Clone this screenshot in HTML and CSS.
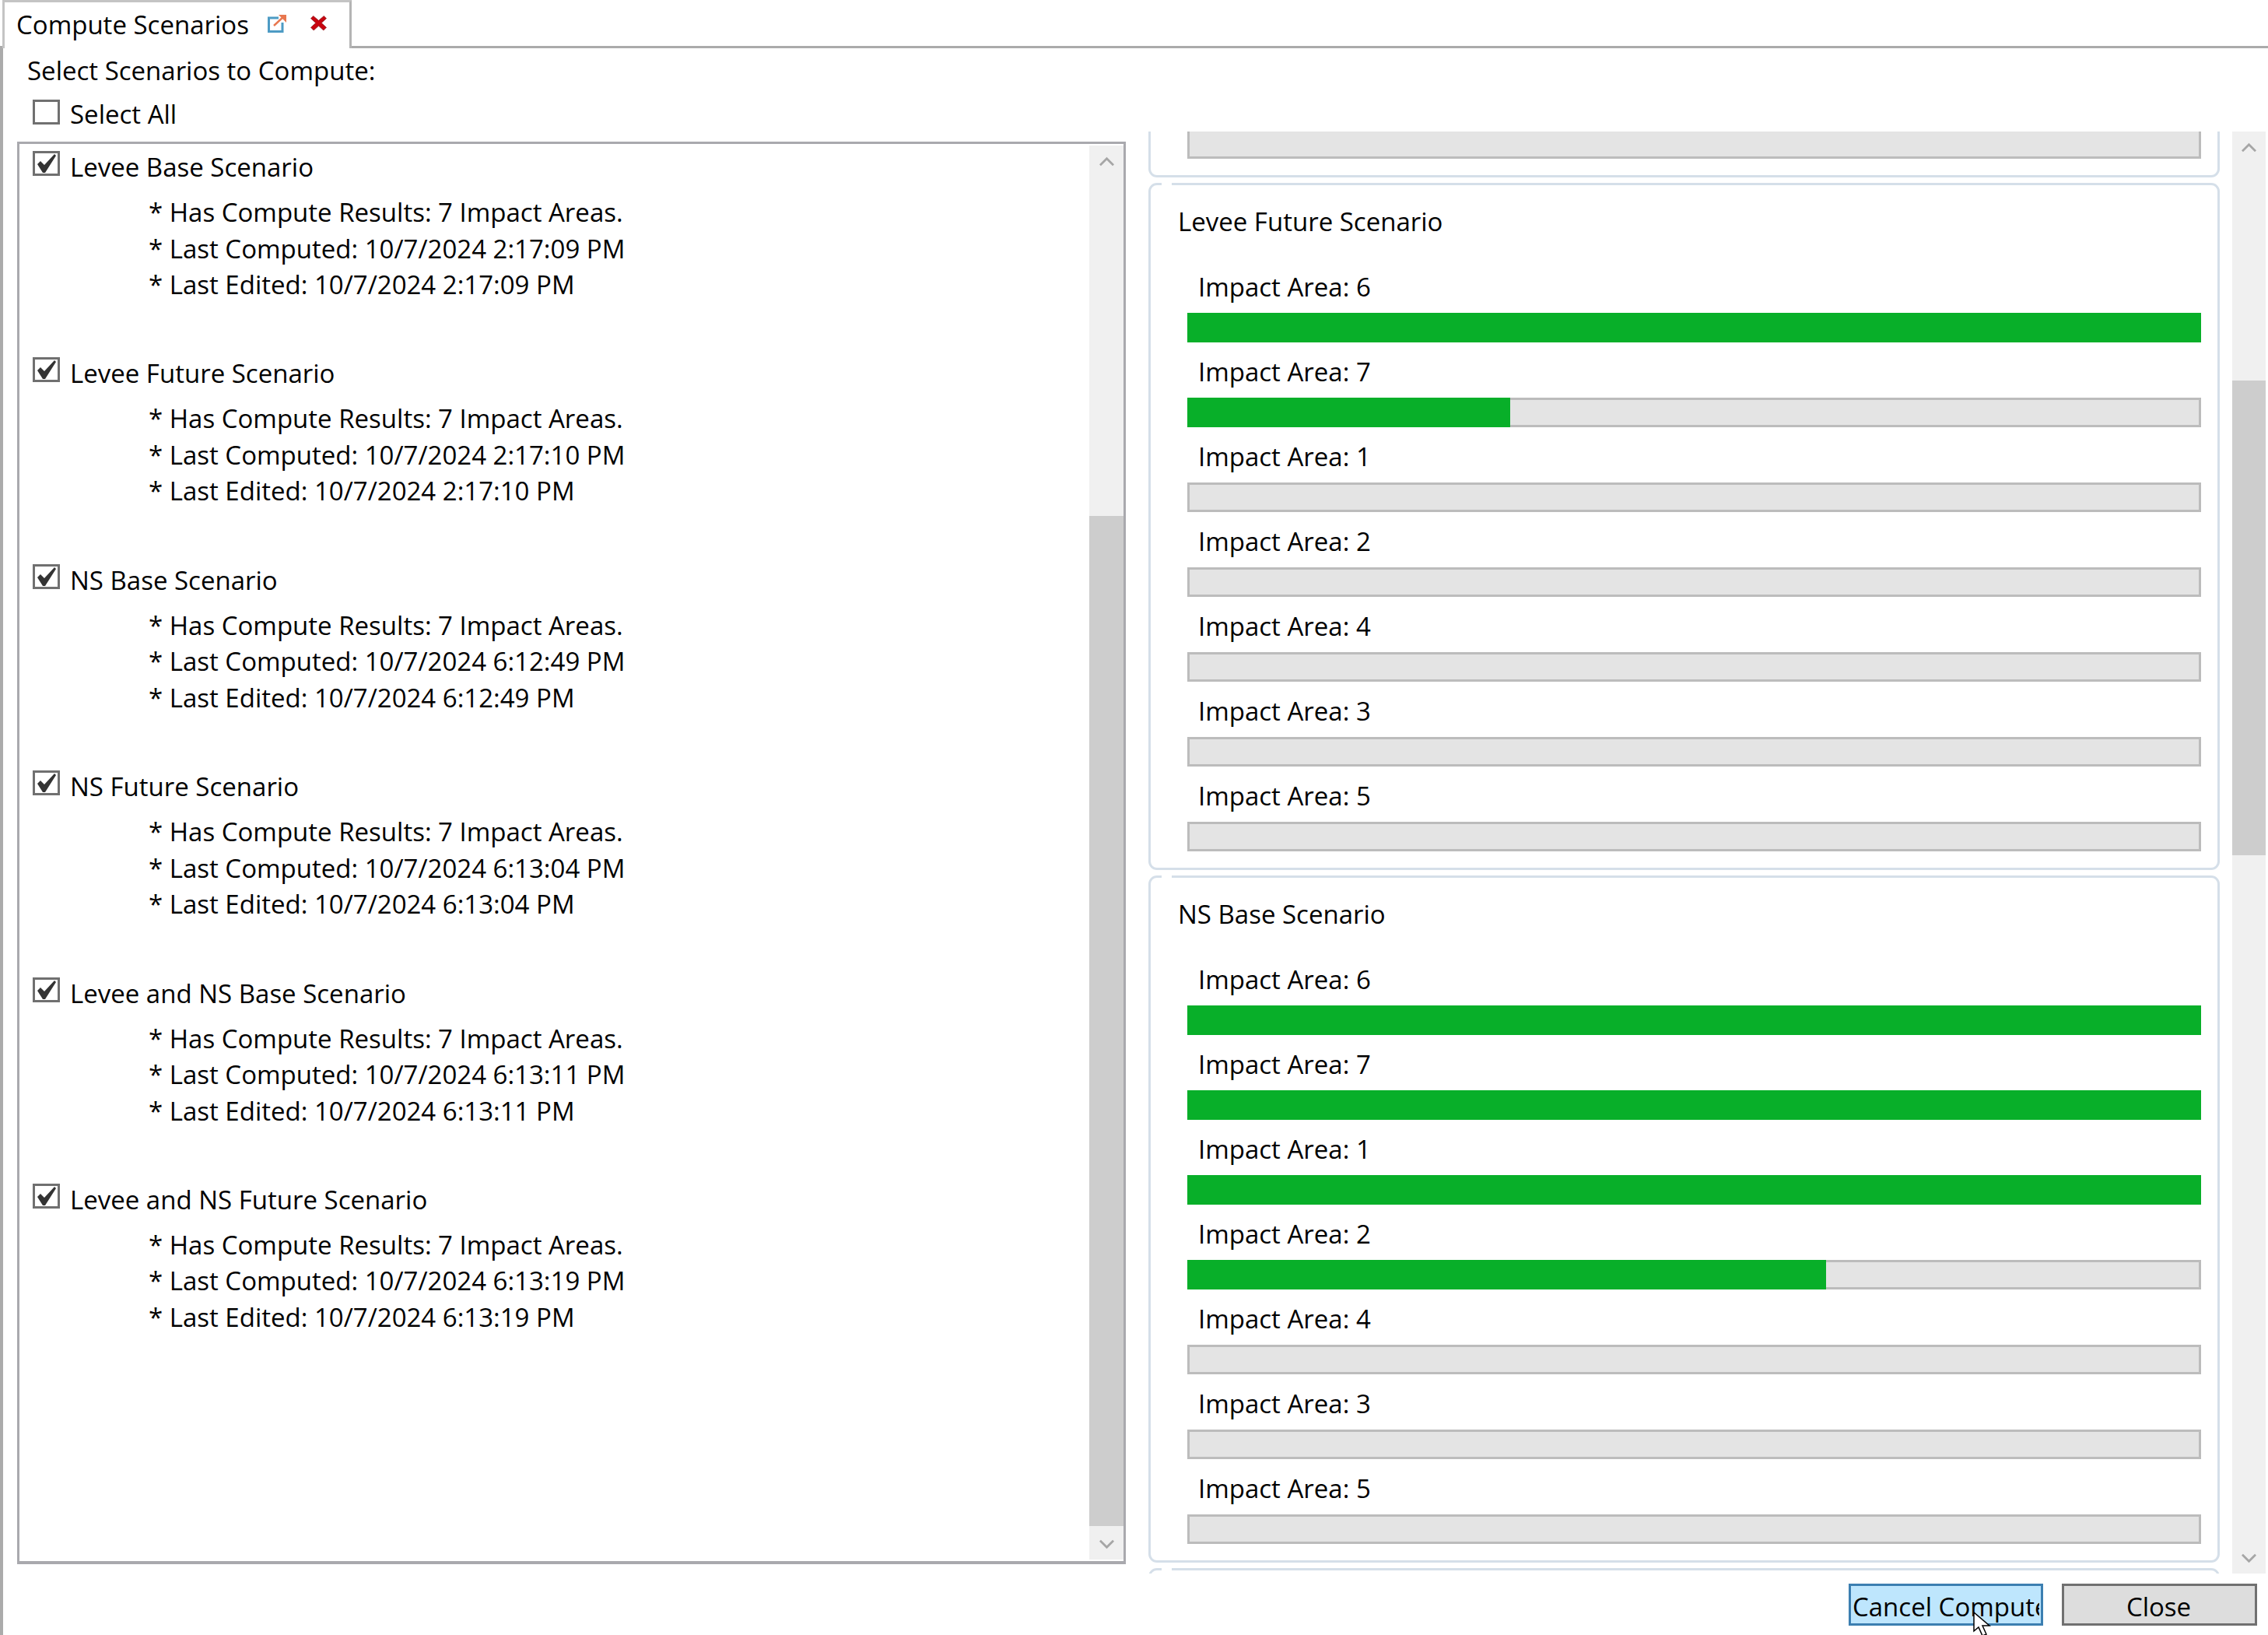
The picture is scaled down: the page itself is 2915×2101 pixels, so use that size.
FILE: index.html
```html
<!DOCTYPE html>
<html lang="en">
<head>
<meta charset="utf-8">
<title>Compute Scenarios</title>
<link rel="stylesheet" href="styles.css">
</head>
<body>
<div class="app">
  <header class="tabstrip">
    <div class="tab">
      <span class="tab-title">Compute Scenarios</span>
      <svg class="icon-pop" viewBox="0 0 26 26"><path d="M15 6H2.500v17.500H20V12" fill="none" stroke="#4d9bc4" stroke-width="3"/><path d="M9 16 23 3" fill="none" stroke="#e8774f" stroke-width="2.400"/><path d="M15 2h10v10z" fill="#e8774f"/></svg>
      <svg class="icon-close" viewBox="0 0 20 20"><path d="M3.500 1.500 10 7 16.500 1.500 19.500 4.500 13.500 10 19.500 15.500 16 19 10 13.500 4 19 .5 15.500 6.500 10 .5 4.500z" fill="#c8050f" stroke="#8d1f25" stroke-width=".7"/></svg>
    </div>
  </header>
  <main class="content">
    <section class="left">
      <div class="heading">Select Scenarios to Compute:</div>
      <label class="check-row select-all"><span class="box"></span><span>Select All</span></label>
      <div class="list">
        <div class="items">
          <div class="item">
            <div class="check-row"><span class="box"><svg class="tick" viewBox="0 0 26 24"><path d="M1 13 5 9l5 5L23 0l2 2-14 22H8z" fill="#333"/></svg></span><span>Levee Base Scenario</span></div>
            <div class="details"><div>* Has Compute Results: 7 Impact Areas.</div><div>* Last Computed: 10/7/2024 2:17:09 PM</div><div>* Last Edited: 10/7/2024 2:17:09 PM</div></div>
          </div>
          <div class="item">
            <div class="check-row"><span class="box"><svg class="tick" viewBox="0 0 26 24"><path d="M1 13 5 9l5 5L23 0l2 2-14 22H8z" fill="#333"/></svg></span><span>Levee Future Scenario</span></div>
            <div class="details"><div>* Has Compute Results: 7 Impact Areas.</div><div>* Last Computed: 10/7/2024 2:17:10 PM</div><div>* Last Edited: 10/7/2024 2:17:10 PM</div></div>
          </div>
          <div class="item">
            <div class="check-row"><span class="box"><svg class="tick" viewBox="0 0 26 24"><path d="M1 13 5 9l5 5L23 0l2 2-14 22H8z" fill="#333"/></svg></span><span>NS Base Scenario</span></div>
            <div class="details"><div>* Has Compute Results: 7 Impact Areas.</div><div>* Last Computed: 10/7/2024 6:12:49 PM</div><div>* Last Edited: 10/7/2024 6:12:49 PM</div></div>
          </div>
          <div class="item">
            <div class="check-row"><span class="box"><svg class="tick" viewBox="0 0 26 24"><path d="M1 13 5 9l5 5L23 0l2 2-14 22H8z" fill="#333"/></svg></span><span>NS Future Scenario</span></div>
            <div class="details"><div>* Has Compute Results: 7 Impact Areas.</div><div>* Last Computed: 10/7/2024 6:13:04 PM</div><div>* Last Edited: 10/7/2024 6:13:04 PM</div></div>
          </div>
          <div class="item">
            <div class="check-row"><span class="box"><svg class="tick" viewBox="0 0 26 24"><path d="M1 13 5 9l5 5L23 0l2 2-14 22H8z" fill="#333"/></svg></span><span>Levee and NS Base Scenario</span></div>
            <div class="details"><div>* Has Compute Results: 7 Impact Areas.</div><div>* Last Computed: 10/7/2024 6:13:11 PM</div><div>* Last Edited: 10/7/2024 6:13:11 PM</div></div>
          </div>
          <div class="item">
            <div class="check-row"><span class="box"><svg class="tick" viewBox="0 0 26 24"><path d="M1 13 5 9l5 5L23 0l2 2-14 22H8z" fill="#333"/></svg></span><span>Levee and NS Future Scenario</span></div>
            <div class="details"><div>* Has Compute Results: 7 Impact Areas.</div><div>* Last Computed: 10/7/2024 6:13:19 PM</div><div>* Last Edited: 10/7/2024 6:13:19 PM</div></div>
          </div>
        </div>
        <div class="scrollbar scrollbar-list">
          <div class="sb-btn"><svg viewBox="0 0 20 12"><path d="M1 11 10 2l9 9" fill="none" stroke="#a6a6a6" stroke-width="3"/></svg></div>
          <div class="sb-thumb"></div>
          <div class="sb-btn sb-end"><svg viewBox="0 0 20 12"><path d="M1 1l9 9 9-9" fill="none" stroke="#a6a6a6" stroke-width="3"/></svg></div>
        </div>
      </div>
    </section>
    <section class="right">
      <div class="progress-area">
        <div class="results">
          <div class="card card-cut"><div class="bar"></div></div>
          <div class="card">
            <div class="card-title">Levee Future Scenario</div>
            <div class="rows">
              <div class="row"><div class="row-label">Impact Area: 6</div><div class="bar"><div class="fill fill-full"></div></div></div>
              <div class="row"><div class="row-label">Impact Area: 7</div><div class="bar"><div class="fill fill-32"></div></div></div>
              <div class="row"><div class="row-label">Impact Area: 1</div><div class="bar"></div></div>
              <div class="row"><div class="row-label">Impact Area: 2</div><div class="bar"></div></div>
              <div class="row"><div class="row-label">Impact Area: 4</div><div class="bar"></div></div>
              <div class="row"><div class="row-label">Impact Area: 3</div><div class="bar"></div></div>
              <div class="row"><div class="row-label">Impact Area: 5</div><div class="bar"></div></div>
            </div>
          </div>
          <div class="card">
            <div class="card-title">NS Base Scenario</div>
            <div class="rows">
              <div class="row"><div class="row-label">Impact Area: 6</div><div class="bar"><div class="fill fill-full"></div></div></div>
              <div class="row"><div class="row-label">Impact Area: 7</div><div class="bar"><div class="fill fill-full"></div></div></div>
              <div class="row"><div class="row-label">Impact Area: 1</div><div class="bar"><div class="fill fill-full"></div></div></div>
              <div class="row"><div class="row-label">Impact Area: 2</div><div class="bar"><div class="fill fill-63"></div></div></div>
              <div class="row"><div class="row-label">Impact Area: 4</div><div class="bar"></div></div>
              <div class="row"><div class="row-label">Impact Area: 3</div><div class="bar"></div></div>
              <div class="row"><div class="row-label">Impact Area: 5</div><div class="bar"></div></div>
            </div>
          </div>
          <div class="card card-next"></div>
        </div>
        <div class="scrollbar scrollbar-results">
          <div class="sb-btn"><svg viewBox="0 0 20 12"><path d="M1 11 10 2l9 9" fill="none" stroke="#a6a6a6" stroke-width="3"/></svg></div>
          <div class="sb-thumb"></div>
          <div class="sb-btn sb-end"><svg viewBox="0 0 20 12"><path d="M1 1l9 9 9-9" fill="none" stroke="#a6a6a6" stroke-width="3"/></svg></div>
        </div>
      </div>
      <div class="actions">
        <button class="btn btn-hot" type="button"><span class="btn-text">Cancel Compute</span></button>
        <button class="btn" type="button"><span class="btn-text btn-center">Close</span></button>
      </div>
      <svg class="cursor" viewBox="0 0 26 32"><path d="M1 1v24l6-5 5 11 5-2-5-11h9z" fill="#fff" stroke="#000" stroke-width="1.500"/></svg>
    </section>
  </main>
</div>
</body>
</html>
```
FILE: styles.css
```css
* { box-sizing: border-box; }
html, body { margin: 0; padding: 0; background: #fff; }
body {
  font-family: "Open Sans", "Noto Sans", "Liberation Sans", sans-serif;
  font-size: 33px;
  line-height: 46.5px;
  color: #000;
}
.app { width: 2915px; height: 2101px; display: flex; flex-direction: column; overflow: hidden; position: relative; }

.tabstrip { height: 62px; border-bottom: 3px solid #ababab; padding-left: 3px; display: flex; flex: none; }
.tab {
  width: 449px; height: 62px;
  border: 3px solid #c4c4c4; border-bottom: 0; border-right-color: #b4b4b4;
  padding-left: 15px;
  display: flex; align-items: center;
  background: #fff;
}
.tab-title { white-space: nowrap; }
.icon-pop { width: 26px; height: 26px; margin-left: 23px; margin-top: -6px; flex: none; }
.icon-close { width: 21px; height: 21px; margin-left: 30px; margin-top: -6px; flex: none; }

.content { flex: 1; min-height: 0; display: flex; border-left: 4px solid #ababab; padding-left: 18px; gap: 29px; }
.left { width: 1425px; flex: none; padding-top: 6px; display: flex; flex-direction: column; }
.heading { padding-left: 13px; white-space: nowrap; }
.check-row { display: flex; align-items: flex-start; gap: 13px; white-space: nowrap; }
.select-all { margin-top: 9px; padding-left: 20px; }
.box {
  width: 35px; height: 32px; margin-top: 2px; flex: none;
  border: 3px solid #707070; background: #fff;
  display: flex; align-items: center; justify-content: center;
}
.select-all .box { margin-top: 4.5px; }
.tick { width: 26px; height: 24px; flex: none; }

.list {
  margin-top: 12px; height: 1828px;
  border: 3px solid #a9a9ae; border-bottom-width: 4px;
  display: flex;
}
.items { flex: 1; min-width: 0; padding: 7px 0 0 17px; }
.item { height: 265.4px; }
.details { margin-top: 11.5px; padding-left: 149px; }

.scrollbar { flex: none; width: 44px; display: flex; flex-direction: column; background: #f0f0f0; }
.scrollbar-list { margin: 2px 0; }
.scrollbar-results { width: 43px; margin-left: 16px; margin-right: 3px; }
.sb-btn { height: 40px; flex: none; display: flex; align-items: center; justify-content: center; }
.sb-btn svg { width: 19px; height: 13px; }
.sb-end { margin-top: auto; }
.sb-thumb { background: #cdcdcd; flex: none; }
.scrollbar-list .sb-thumb { margin-top: 436px; height: 1298px; }
.scrollbar-results .sb-thumb { margin-top: 280px; height: 610px; }

.right { flex: 1; min-width: 0; display: flex; flex-direction: column; padding-top: 107px; position: relative; }
.progress-area { height: 1853px; flex: none; display: flex; }
.results { flex: 1; min-width: 0; overflow: hidden; display: flex; flex-direction: column; gap: 7px; }
.card {
  position: relative; flex: none;
  border: 3px solid #d5dfe9; border-radius: 11px;
  padding: 24px 21px 21px 47px;
}
.card::before { content: ""; position: absolute; left: 14px; top: -3px; width: 13px; height: 3px; background: #fff; }
.card-cut { border-top: 0; border-radius: 0 0 11px 11px; margin-top: -3px; padding-top: 0; }
.card-cut::before { display: none; }
.card-next { height: 40px; }
.card-title { margin-left: -12px; margin-bottom: 37.5px; white-space: nowrap; }
.rows { display: flex; flex-direction: column; gap: 15px; }
.row-label { padding-left: 14px; margin-bottom: 9.5px; white-space: nowrap; }
.bar { position: relative; height: 38px; background: #e4e4e4; border: 3px solid #bcbcbc; }
.fill { position: absolute; left: -3px; top: -3px; bottom: -3px; background: #08af29; }
.fill-full { right: -3px; }
.fill-32 { width: 32%; }
.fill-63 { width: 63.3%; }

.actions { display: flex; justify-content: flex-end; gap: 24px; margin-top: 13px; padding-right: 14px; }
.btn {
  width: 251px; height: 54px; padding: 7px 5px 0 3px;
  border: 3px solid #707070; background: #ddd;
  font: inherit; color: #000;
  display: flex; align-items: center;
}
.btn-hot { width: 250px; padding: 7px 2px 0 2px; background: #bee6fd; border-color: #3c7fb1; }
.btn-text { display: block; flex: 1; min-width: 0; overflow: hidden; white-space: nowrap; text-align: left; }
.btn-center { text-align: center; }
.cursor { position: absolute; left: 1060px; top: 2009px; width: 26px; height: 32px; }
```
